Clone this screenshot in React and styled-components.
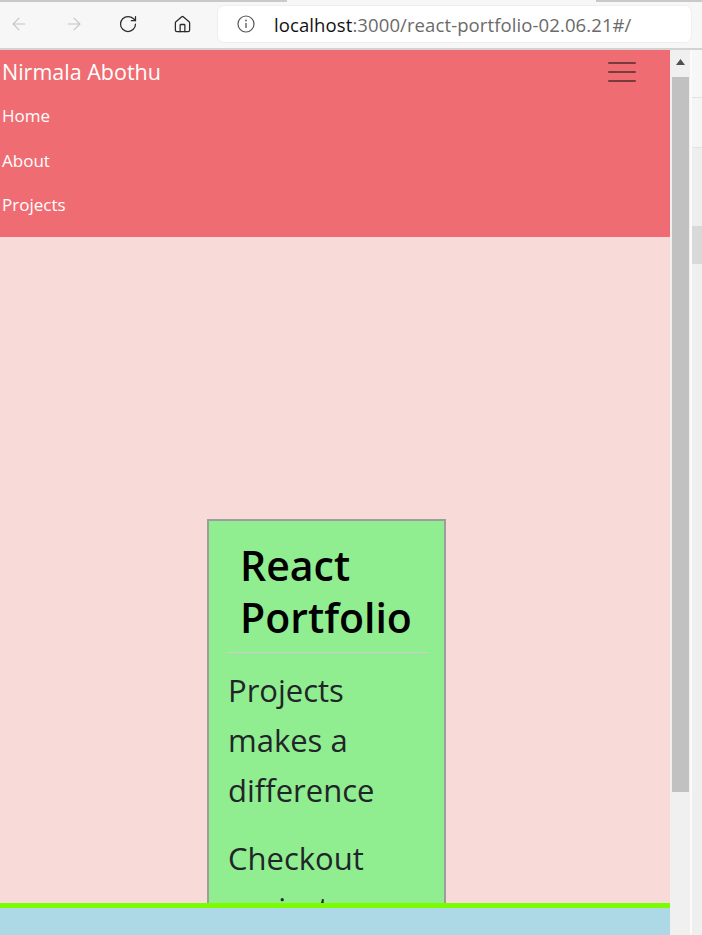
import React from "react";
import styled, { createGlobalStyle } from "styled-components";
import { ArrowLeft, ArrowRight, RotateCw, House } from "lucide-react";

const GlobalStyle = createGlobalStyle`
  html, body { margin: 0; padding: 0; }
  body {
    font-family: "Open Sans", "Noto Sans", sans-serif;
    width: 702px;
    height: 935px;
    overflow: hidden;
    background: #f7f7f7;
  }
  * { box-sizing: border-box; }
`;

const Window = styled.div`
  width: 702px;
  height: 935px;
  display: flex;
  flex-direction: column;
`;

const Chrome = styled.header`
  height: 50px;
  background: #f7f7f7;
  border-bottom: 2px solid #d2d2d2;
  display: flex;
  flex-direction: column;
`;

const TabEdge = styled.div`
  height: 2px;
  display: flex;
  justify-content: space-between;
`;

const EdgeSegment = styled.div`
  width: ${(p) => p.$w}px;
  background: #c9c9c9;
`;

const ToolRow = styled.div`
  flex: 1;
  display: flex;
  align-items: flex-start;
  padding-top: 4px;
`;

const NavButton = styled.div`
  width: 38px;
  height: 36px;
  margin-right: 16.5px;
  display: flex;
  align-items: center;
  justify-content: center;
  color: ${(p) => (p.$disabled ? "#c4c4c4" : "#2b2b2b")};
  &:last-of-type { margin-right: 17.5px; }
`;

const AddressBar = styled.div`
  flex: 1;
  height: 36px;
  margin-right: 11px;
  background: #ffffff;
  border-radius: 6px;
  display: flex;
  align-items: center;
  padding-left: 19px;
  gap: 19px;
  box-shadow: 0 0 0 1px #efefef;
`;

const Url = styled.span`
  font-size: 18.5px;
  color: #6a6a6a;
  letter-spacing: 0.1px;
  white-space: nowrap;
`;

const Host = styled.span`
  color: #111;
`;

const Body = styled.div`
  height: 885px;
  display: flex;
`;

const Page = styled.div`
  width: 670px;
  height: 885px;
  overflow: hidden;
  display: flex;
  flex-direction: column;
`;

const Navbar = styled.nav`
  height: 187px;
  flex-shrink: 0;
  background: #ef6d72;
  padding: 7px 0 10px 2px;
  display: flex;
  flex-direction: column;
`;

const BrandRow = styled.div`
  height: 30px;
  display: flex;
  align-items: center;
  justify-content: space-between;
  padding-right: 34px;
`;

const Brand = styled.span`
  font-size: 21.5px;
  line-height: 30px;
  color: #ffffff;
`;

const Toggler = styled.div`
  width: 28px;
  display: flex;
  flex-direction: column;
  gap: 7px;
`;

const TogglerLine = styled.span`
  display: block;
  height: 2px;
  background: #7a3a3e;
  border-radius: 1px;
`;

const NavLinks = styled.div`
  margin-top: 7px;
  display: flex;
  flex-direction: column;
`;

const NavLink = styled.a`
  font-size: 17px;
  line-height: 20.5px;
  padding: 12px 0;
  color: #ffffff;
  text-decoration: none;
`;

const Main = styled.main`
  height: 666px;
  flex-shrink: 0;
  overflow: hidden;
  background: #f8dbd8;
  padding-top: 282px;
`;

const Card = styled.section`
  margin-left: 207px;
  width: 239px;
  min-height: 500px;
  background: #90ee90;
  border: 2px solid #9d9d9d;
  padding: 17.5px 16px 0 18px;
`;

const Title = styled.h1`
  margin: 0;
  padding-left: 13px;
  font-size: 41px;
  font-weight: 600;
  line-height: 52px;
  color: #000;
`;

const Rule = styled.hr`
  border: 0;
  height: 1px;
  background: #cfcfcf;
  margin: 9.5px 0 11.5px;
`;

const Text = styled.p`
  margin: 0 0 18px;
  padding-left: 1px;
  font-size: 31px;
  line-height: 50px;
  color: #212529;
`;

const Footer = styled.footer`
  flex-shrink: 0;
  height: 80px;
  background: #add8e6;
  border-top: 5px solid #7cfc00;
  padding-top: 24px;
  text-align: center;
  font-size: 16px;
  color: #333;
`;

const Scrollbar = styled.div`
  width: 20px;
  background: #f0f0f0;
  display: flex;
  flex-direction: column;
`;

const ScrollArrow = styled.div`
  height: 24px;
  display: flex;
  align-items: center;
  justify-content: center;
  padding-left: 1px;
`;

const Thumb = styled.div`
  margin: 3px 1px 0 2px;
  height: 715px;
  background: #c1c1c1;
`;

const Divider = styled.div`
  width: 2px;
  background: #fbfbfb;
`;

const SidePanel = styled.div`
  flex: 1;
  display: flex;
  flex-direction: column;
  background: #efefef;
`;

const PanelBlock = styled.div`
  height: ${(p) => p.$h}px;
  background: ${(p) => p.$bg};
  border-bottom: ${(p) => (p.$line ? "1px solid #e2e2e2" : "none")};
`;

function InfoIcon() {
  return (
    <svg width="18" height="18" viewBox="0 0 18 18" fill="none">
      <circle cx="9" cy="9" r="8" stroke="#555" strokeWidth="1.2" />
      <line x1="9" y1="8" x2="9" y2="13" stroke="#555" strokeWidth="1.3" />
      <circle cx="9" cy="5.5" r="0.9" fill="#555" />
    </svg>
  );
}

export default function App() {
  return (
    <>
      <GlobalStyle />
      <Window>
        <Chrome>
          <TabEdge>
            <EdgeSegment $w={287} />
            <EdgeSegment $w={106} />
          </TabEdge>
          <ToolRow>
            <NavButton $disabled>
              <ArrowLeft size={20} strokeWidth={1.3} />
            </NavButton>
            <NavButton $disabled>
              <ArrowRight size={20} strokeWidth={1.3} />
            </NavButton>
            <NavButton>
              <RotateCw size={20} strokeWidth={1.5} />
            </NavButton>
            <NavButton>
              <House size={19} strokeWidth={1.6} />
            </NavButton>
            <AddressBar>
              <InfoIcon />
              <Url>
                <Host>localhost</Host>:3000/react-portfolio-02.06.21#/
              </Url>
            </AddressBar>
          </ToolRow>
        </Chrome>
        <Body>
          <Page>
            <Navbar>
              <BrandRow>
                <Brand>Nirmala Abothu</Brand>
                <Toggler>
                  <TogglerLine />
                  <TogglerLine />
                  <TogglerLine />
                </Toggler>
              </BrandRow>
              <NavLinks>
                <NavLink href="#/">Home</NavLink>
                <NavLink href="#/about">About</NavLink>
                <NavLink href="#/projects">Projects</NavLink>
              </NavLinks>
            </Navbar>
            <Main>
              <Card>
                <Title>React Portfolio</Title>
                <Rule />
                <Text>Projects makes a difference</Text>
                <Text>Checkout projects</Text>
              </Card>
            </Main>
            <Footer>© Nirmala Abothu</Footer>
          </Page>
          <Scrollbar>
            <ScrollArrow>
              <svg width="9" height="6" viewBox="0 0 9 6">
                <polygon points="4.5,0 9,6 0,6" fill="#505050" />
              </svg>
            </ScrollArrow>
            <Thumb />
          </Scrollbar>
          <Divider />
          <SidePanel>
            <PanelBlock $h={48} $bg="#f7f7f7" $line />
            <PanelBlock $h={50} $bg="#f5f5f5" $line />
            <PanelBlock $h={78} $bg="#eeeeee" />
            <PanelBlock $h={38} $bg="#d9d9d9" />
          </SidePanel>
        </Body>
      </Window>
    </>
  );
}
